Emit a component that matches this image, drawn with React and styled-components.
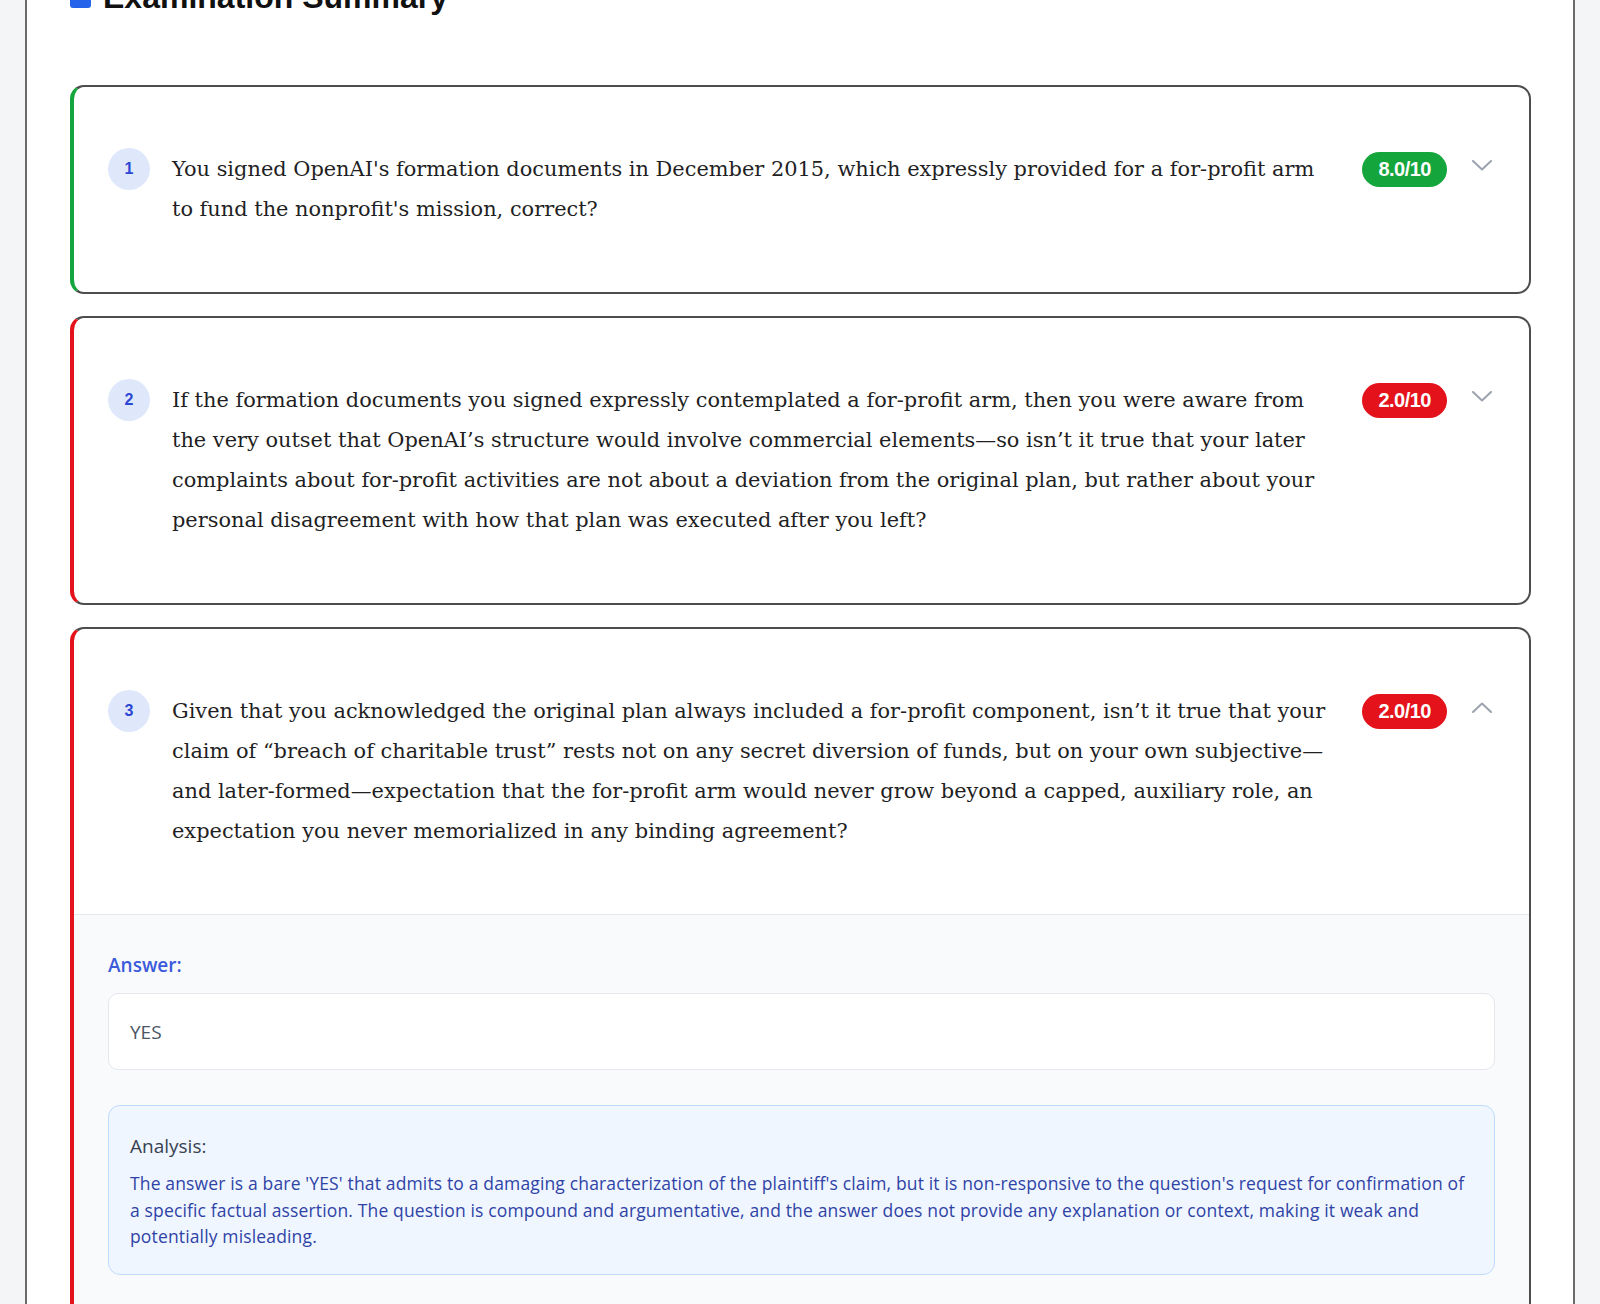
import React from 'react';
import styled, { createGlobalStyle } from 'styled-components';

const GlobalStyle = createGlobalStyle`
  html, body {
    margin: 0;
    padding: 0;
    background: #f4f5f7;
  }
  * {
    box-sizing: border-box;
  }
`;

const Shell = styled.div`
  margin: 0 25px;
  min-height: 1304px;
  background: #fff;
  border-left: 2px solid #6b6b6b;
  border-right: 2px solid #6b6b6b;
  padding: 0 42px 0 43px;
  overflow: hidden;
`;

const TitleRow = styled.div`
  display: flex;
  align-items: center;
  gap: 12px;
  height: 40px;
  margin-top: -23px;
`;

const TitleMark = styled.span`
  width: 21px;
  height: 16px;
  margin-top: 5px;
  border-radius: 3px;
  background: #2563eb;
`;

const Title = styled.h2`
  margin: 0;
  font-family: "Liberation Sans", Arial, sans-serif;
  font-size: 32px;
  font-weight: 700;
  line-height: 40px;
  color: #111;
`;

const CardList = styled.div`
  display: flex;
  flex-direction: column;
  gap: 22px;
  margin-top: 68px;
`;

const Card = styled.div`
  background: #fff;
  border: 2px solid #4d4d4d;
  border-left: 4px solid ${(p) => p.$accent};
  border-radius: 14px;
  overflow: hidden;
`;

const CardHeader = styled.div`
  display: flex;
  align-items: flex-start;
  padding: 62px 37px 63px 34px;
`;

const NumberDot = styled.div`
  flex-shrink: 0;
  width: 42px;
  height: 42px;
  margin-top: -1px;
  margin-right: 22px;
  border-radius: 50%;
  background: #dfe8fb;
  color: #2b47d4;
  display: flex;
  align-items: center;
  justify-content: center;
  font-family: "Liberation Sans", Arial, sans-serif;
  font-size: 16px;
  font-weight: 700;
`;

const Question = styled.p`
  flex: 1;
  margin: 0;
  font-family: "DejaVu Serif", Georgia, serif;
  font-size: 20.9px;
  line-height: 40px;
  color: #1f1f24;
`;

const Score = styled.span`
  flex-shrink: 0;
  margin-left: 24px;
  margin-top: 3px;
  height: 35px;
  padding: 0 16px;
  border-radius: 18px;
  background: ${(p) => p.$bg};
  color: #fff;
  display: flex;
  align-items: center;
  font-family: "Liberation Sans", Arial, sans-serif;
  font-size: 20px;
  font-weight: 700;
  letter-spacing: -0.5px;
`;

const Chevron = styled.svg`
  flex-shrink: 0;
  margin-left: 25px;
  margin-top: 11px;
  width: 20px;
  height: 11px;
`;

const Details = styled.div`
  border-top: 1px solid #e5e7eb;
  background: #f9fafb;
  padding: 36px 34px 60px 34px;
  font-family: "Open Sans", "Noto Sans", sans-serif;
`;

const AnswerLabel = styled.div`
  font-size: 19px;
  line-height: 28px;
  font-weight: 600;
  color: #3b5bdb;
  margin-bottom: 14px;
`;

const AnswerBox = styled.div`
  background: #fff;
  border: 1px solid #e5e7eb;
  border-radius: 10px;
  padding: 24px 21px 23px;
  font-size: 19px;
  line-height: 28px;
  color: #4b5563;
  margin-bottom: 35px;
`;

const AnalysisBox = styled.div`
  background: #eff6ff;
  border: 1.5px solid #bfdbfe;
  border-radius: 12px;
  padding: 26px 22px 24px 21px;
`;

const AnalysisTitle = styled.div`
  font-size: 19px;
  line-height: 28px;
  color: #374151;
  margin-bottom: 10px;
`;

const AnalysisText = styled.p`
  margin: 0;
  font-size: 17.5px;
  letter-spacing: 0.15px;
  line-height: 26.5px;
  color: #2f43a6;
`;

const GREEN = '#14a53c';
const RED = '#e3121b';

const questions = [
  {
    n: 1,
    score: '8.0/10',
    color: GREEN,
    open: false,
    text: "You signed OpenAI's formation documents in December 2015, which expressly provided for a for-profit arm to fund the nonprofit's mission, correct?",
  },
  {
    n: 2,
    score: '2.0/10',
    color: RED,
    open: false,
    text: 'If the formation documents you signed expressly contemplated a for-profit arm, then you were aware from the very outset that OpenAI\u2019s structure would involve commercial elements\u2014so isn\u2019t it true that your later complaints about for-profit activities are not about a deviation from the original plan, but rather about your personal disagreement with how that plan was executed after you left?',
  },
  {
    n: 3,
    score: '2.0/10',
    color: RED,
    open: true,
    text: 'Given that you acknowledged the original plan always included a for-profit component, isn\u2019t it true that your claim of \u201cbreach of charitable trust\u201d rests not on any secret diversion of funds, but on your own subjective\u2014and later-formed\u2014expectation that the for-profit arm would never grow beyond a capped, auxiliary role, an expectation you never memorialized in any binding agreement?',
    answer: 'YES',
    analysis: "The answer is a bare 'YES' that admits to a damaging characterization of the plaintiff's claim, but it is non-responsive to the question's request for confirmation of a specific factual assertion. The question is compound and argumentative, and the answer does not provide any explanation or context, making it weak and potentially misleading.",
  },
];

function ChevronIcon({ up }) {
  return (
    <Chevron viewBox="0 0 20 11" fill="none">
      <polyline
        points={up ? '1,10 10,1.5 19,10' : '1,1 10,9.5 19,1'}
        stroke="#9ca3af"
        strokeWidth="2"
        strokeLinecap="round"
        strokeLinejoin="round"
      />
    </Chevron>
  );
}

function QuestionCard({ q }) {
  return (
    <Card $accent={q.color}>
      <CardHeader>
        <NumberDot>{q.n}</NumberDot>
        <Question>{q.text}</Question>
        <Score $bg={q.color}>{q.score}</Score>
        <ChevronIcon up={q.open} />
      </CardHeader>
      {q.open && (
        <Details>
          <AnswerLabel>Answer:</AnswerLabel>
          <AnswerBox>{q.answer}</AnswerBox>
          <AnalysisBox>
            <AnalysisTitle>Analysis:</AnalysisTitle>
            <AnalysisText>{q.analysis}</AnalysisText>
          </AnalysisBox>
        </Details>
      )}
    </Card>
  );
}

export default function App() {
  return (
    <>
      <GlobalStyle />
      <Shell>
        <TitleRow>
          <TitleMark />
          <Title>Examination Summary</Title>
        </TitleRow>
        <CardList>
          {questions.map((q) => (
            <QuestionCard key={q.n} q={q} />
          ))}
        </CardList>
      </Shell>
    </>
  );
}
